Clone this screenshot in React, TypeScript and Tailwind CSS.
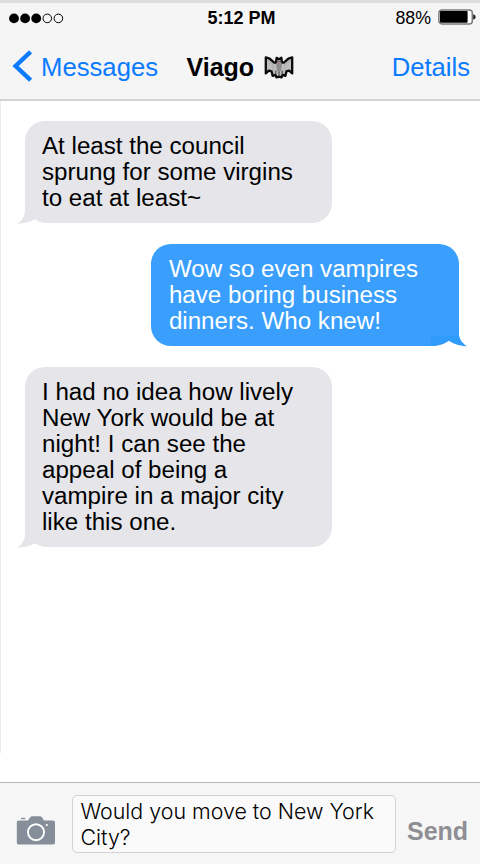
import React from "react";

type Message = {
  id: number;
  sent: boolean;
  lines: string[];
};

const messages: Message[] = [
  {
    id: 1,
    sent: false,
    lines: ["At least the council", "sprung for some virgins", "to eat at least~"],
  },
  {
    id: 2,
    sent: true,
    lines: ["Wow so even vampires", "have boring business", "dinners. Who knew!"],
  },
  {
    id: 3,
    sent: false,
    lines: [
      "I had no idea how lively",
      "New York would be at",
      "night! I can see the",
      "appeal of being a",
      "vampire in a major city",
      "like this one.",
    ],
  },
];

const SIGNAL = [true, true, true, false, false];

function StatusBar() {
  return (
    <div className="grid h-[30px] grid-cols-[1fr_auto_1fr] items-center pl-[8px] pr-[4px]">
      <svg width="56" height="12" viewBox="0 0 56 12">
        {SIGNAL.map((on, i) => (
          <circle
            key={i}
            cx={6 + i * 11.1}
            cy="6.4"
            r={on ? 4.9 : 4.3}
            fill={on ? "#000" : "none"}
            stroke={on ? "none" : "#000"}
            strokeWidth="1"
          />
        ))}
      </svg>
      <span className="-ml-px text-[18px] leading-[20px] font-bold">5:12 PM</span>
      <div className="flex items-center justify-end gap-[7px]">
        <span className="text-[17.8px] leading-[20px]">88%</span>
        <svg className="-mt-[2px]" width="38" height="16" viewBox="0 0 38 16">
          <rect x="0.9" y="0.9" width="33.4" height="14" rx="3" fill="#fff" stroke="#7a7a7a" strokeWidth="1.5" />
          <rect x="2" y="2" width="27.6" height="11.8" rx="1" fill="#000" />
          <path d="M35.2 5.2c1.6.4 2.4 1.4 2.4 2.7s-.8 2.3-2.4 2.7z" fill="#222" />
        </svg>
      </div>
    </div>
  );
}

function Bat() {
  return (
    <svg width="30" height="25" viewBox="0 0 30 25" strokeLinejoin="round">
      <path
        d="M1.8 2.4L5.6 3.6L10.2 7.6L12 7.6L12.6 2.8L15 4.2L17.4 2.8L18 7.6L19.8 7.6L24.4 3.6L28.2 2.4V18.4L25.2 15.6L22.4 16.4L21.4 20.8L18.6 19.8L17.6 22.4L15 21.6L12.4 22.4L11.4 19.8L8.6 20.8L7.6 16.4L4.8 15.6L1.8 18.4Z"
        fill="#bdbdbd"
        stroke="#0c0c0c"
        strokeWidth="2.3"
      />
      <path d="M13 6L15 5.6L17 6L17.8 10L17.2 15L15 18.5L12.8 15L12.2 10Z" fill="#8c8c8c" />
      <path d="M11.8 15.6V19.6M15 17V21M18.2 15.6V19.6" stroke="#444" strokeWidth="1" />
      <path d="M3.4 5L9.6 10.4L8.2 15M26.6 5L20.4 10.4L21.8 15" fill="none" stroke="#a2a2a2" strokeWidth="0.7" />
      <path d="M13.2 6.4h1.1M15.8 6.4h1.1" stroke="#333" strokeWidth="0.9" />
      <path d="M14.2 8.8h1.8" stroke="#c07a70" strokeWidth="1.2" />
    </svg>
  );
}

function NavBar() {
  return (
    <div className="relative flex h-[66px] items-center justify-between pl-[12px] pr-[10px]">
      <div className="flex items-center gap-[9px] text-[#0a7aff]">
        <svg width="20" height="32" viewBox="0 0 20 32">
          <path d="M18.6 1.8L3.6 16L18.6 30.2" fill="none" stroke="currentColor" strokeWidth="4.4" />
        </svg>
        <span className="mt-px text-[25.7px] leading-[30px]">Messages</span>
      </div>
      <div className="absolute left-[186.5px] top-[19px] flex items-center gap-[10px]">
        <h1 className="text-[25px] leading-[30px] font-bold">Viago</h1>
        <Bat />
      </div>
      <span className="mt-px text-[25.6px] leading-[30px] text-[#0a7aff]">Details</span>
    </div>
  );
}

function Bubble({ message }: { message: Message }) {
  const { sent, lines } = message;
  return (
    <div
      className={
        sent
          ? "relative mr-[20.6px] w-[308px] self-end rounded-[20px] rounded-br-[2px] bg-[#3a9ffc] pt-[12px] pb-[12px] pl-[17.5px] text-white"
          : "relative ml-[23.5px] w-[307.5px] self-start rounded-[20px] bg-[#e5e5ea] pt-[12px] pb-[12px] pl-[17.5px] text-black"
      }
    >
      {sent ? (
        <svg className="absolute -right-[8px] -bottom-px" width="36" height="13" viewBox="0 0 36 13">
          <path d="M0 1.5H28C29 6 31.5 9.5 36 12.4C28 12.2 22 10.2 18 7.2C13 10 8 12 0 12Z" fill="#2f9cfb" />
          <path d="M3 12.2C10 11.4 14 9.4 18 6.8C22 9.6 27 11.6 35 12.4V13H3Z" fill="#fff" />
        </svg>
      ) : (
        <svg className="absolute -left-[8px] -bottom-px" width="36" height="22" viewBox="0 0 36 22">
          <path d="M8 0H36V21H30C24 21 21 19 18 17.2C13 20 7 22 0 21.4C5 19 8 14 8 8Z" fill="#e5e5ea" />
          <path d="M4 22C10 21 14 19.5 18 17.2C21 19 24 21 30 21V22Z" fill="#fff" />
        </svg>
      )}
      <div className="relative">
        {lines.map((line) => (
          <p key={line} className="whitespace-nowrap text-[24.15px] leading-[26.1px]">
            {line}
          </p>
        ))}
      </div>
    </div>
  );
}

function Composer() {
  return (
    <div className="flex h-[82px] items-start border-t border-[#b8b8be] bg-[#f6f6f7] pl-[16px]">
      <svg className="mt-[33px] shrink-0" width="40" height="30" viewBox="0 0 40 30">
        <path
          d="M2.8 4.6H12L14.2 1.3Q14.9 .2 16.3 .2H23.8Q25.2 .2 25.9 1.3L28 4.6H37Q39 4.6 39 6.6V26.5Q39 28.5 37 28.5H2.8Q.8 28.5 .8 26.5V6.6Q.8 4.6 2.8 4.6Z"
          fill="#858e99"
        />
        <rect x="5" y="1.7" width="4.4" height="1.6" rx="0.8" fill="#858e99" />
        <circle cx="20" cy="16.2" r="8" fill="none" stroke="#fff" strokeWidth="1.9" />
        <circle cx="30.8" cy="9" r="1.1" fill="#fff" />
      </svg>
      <div className="mt-[12px] ml-[16px] h-[58px] w-[324px] shrink-0 rounded-[5px] border border-[#d2d2d6] bg-[#fafafa] pt-[2px] pl-[7.5px] font-['Inter',sans-serif] text-[21.4px] leading-[26px] font-[350] text-black">
        <p className="whitespace-nowrap">Would you move to New York</p>
        <p>City?</p>
      </div>
      <span className="mt-[33px] ml-[11px] text-[25px] leading-[30px] font-bold text-[#8e8e93]">Send</span>
    </div>
  );
}

export default function App() {
  return (
    <div className="flex h-[864px] w-[480px] flex-col overflow-hidden bg-white font-['Liberation_Sans',Arial,sans-serif] text-black">
      <header className="h-[101px] border-t-[3px] border-b-2 border-t-[#dedede] border-b-[#d2d2d2] bg-[#f5f5f5]">
        <StatusBar />
        <NavBar />
      </header>
      <main className="flex h-[652px] flex-col gap-[20.5px] border-l border-[#ececee] pt-[20px]">
        {messages.map((message) => (
          <Bubble key={message.id} message={message} />
        ))}
      </main>
      <footer className="mt-auto">
        <Composer />
      </footer>
    </div>
  );
}
